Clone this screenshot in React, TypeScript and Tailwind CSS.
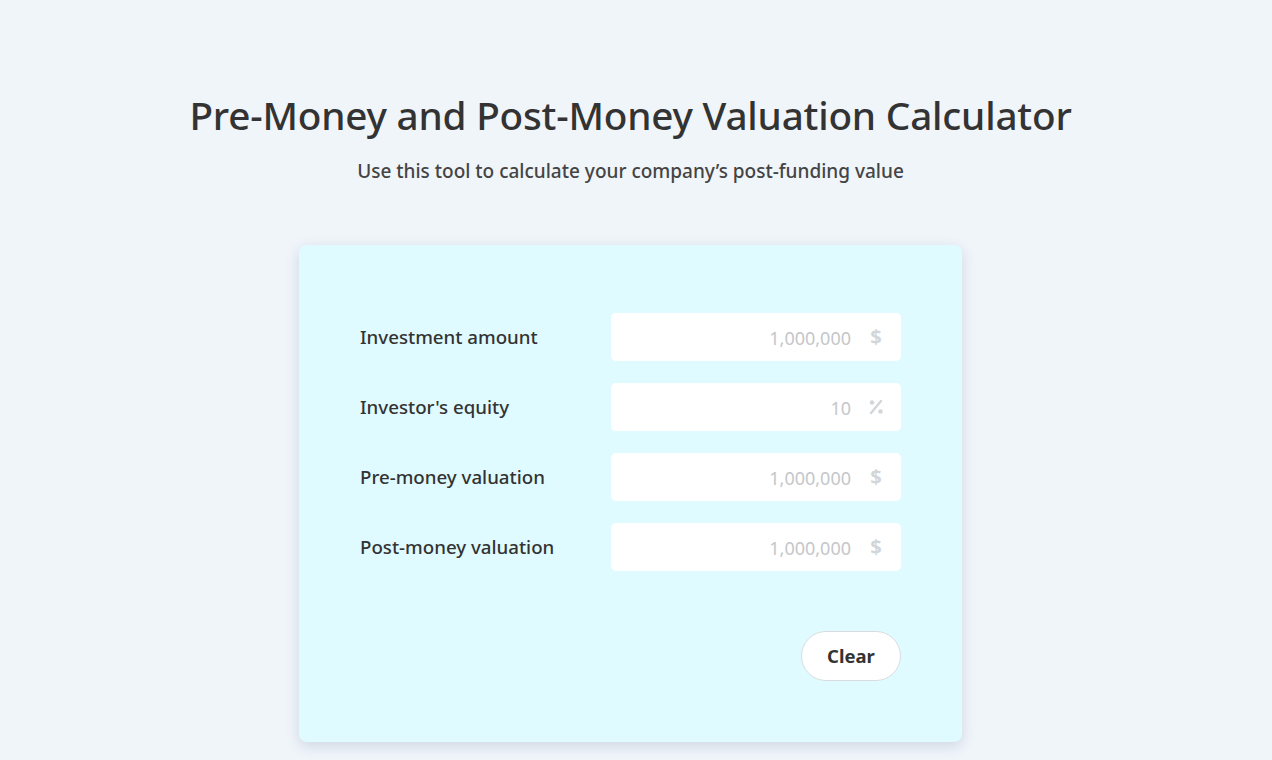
import React from 'react';

const font = { fontFamily: '"Noto Sans", "Open Sans", sans-serif' };

const fields = [
  { label: 'Investment amount', value: '1,000,000', unit: '$' },
  { label: "Investor's equity", value: '10', unit: '%' },
  { label: 'Pre-money valuation', value: '1,000,000', unit: '$' },
  { label: 'Post-money valuation', value: '1,000,000', unit: '$' },
];

function PercentIcon() {
  return (
    <svg width="18" height="18" viewBox="0 0 18 18" className="text-[#d2d6d9]">
      <line x1="14" y1="3" x2="4" y2="15" stroke="currentColor" strokeWidth="2.4" strokeLinecap="round" />
      <circle cx="5" cy="4.5" r="2.2" fill="currentColor" />
      <circle cx="13.5" cy="13.5" r="2.2" fill="currentColor" />
    </svg>
  );
}

export default function App() {
  return (
    <div className="min-h-screen bg-[#f0f5fa] flex flex-col items-center pt-[87px] pr-[11px]" style={font}>
      <h1 className="text-[38.7px] leading-[56px] text-[#333] font-medium tracking-[-0.2px]">
        Pre-Money and Post-Money Valuation Calculator
      </h1>
      <p className="mt-[16px] text-[19px] leading-6 text-[#444] font-medium">
        Use this tool to calculate your company’s post-funding value
      </p>

      <div className="mt-[62px] w-[663px] rounded-lg bg-[#e0fbff] shadow-[0_4px_14px_rgba(60,80,120,0.18)] px-[61px] pt-[68px] pb-[61px]">
        <div className="flex flex-col gap-[22px]">
          {fields.map((f) => (
            <div key={f.label} className="flex items-center justify-between">
              <span className="text-[18.7px] text-[#333] font-medium">{f.label}</span>
              <div className="w-[290px] h-[48px] bg-white rounded-[5px] flex items-center justify-end pr-[16px]">
                <span className="text-[18px] text-[#c4c7ca] mr-[16px] mt-[2px]">{f.value}</span>
                {f.unit === '$' ? (
                  <span className="text-[20px] font-bold text-[#d2d6d9] w-[18px] text-center">$</span>
                ) : (
                  <PercentIcon />
                )}
              </div>
            </div>
          ))}
        </div>
        <div className="flex justify-end mt-[60px]">
          <button className="w-[100px] h-[50px] rounded-full bg-white border border-[#d9dcdf] text-[18.5px] font-bold text-[#333]">
            Clear
          </button>
        </div>
      </div>
    </div>
  );
}
